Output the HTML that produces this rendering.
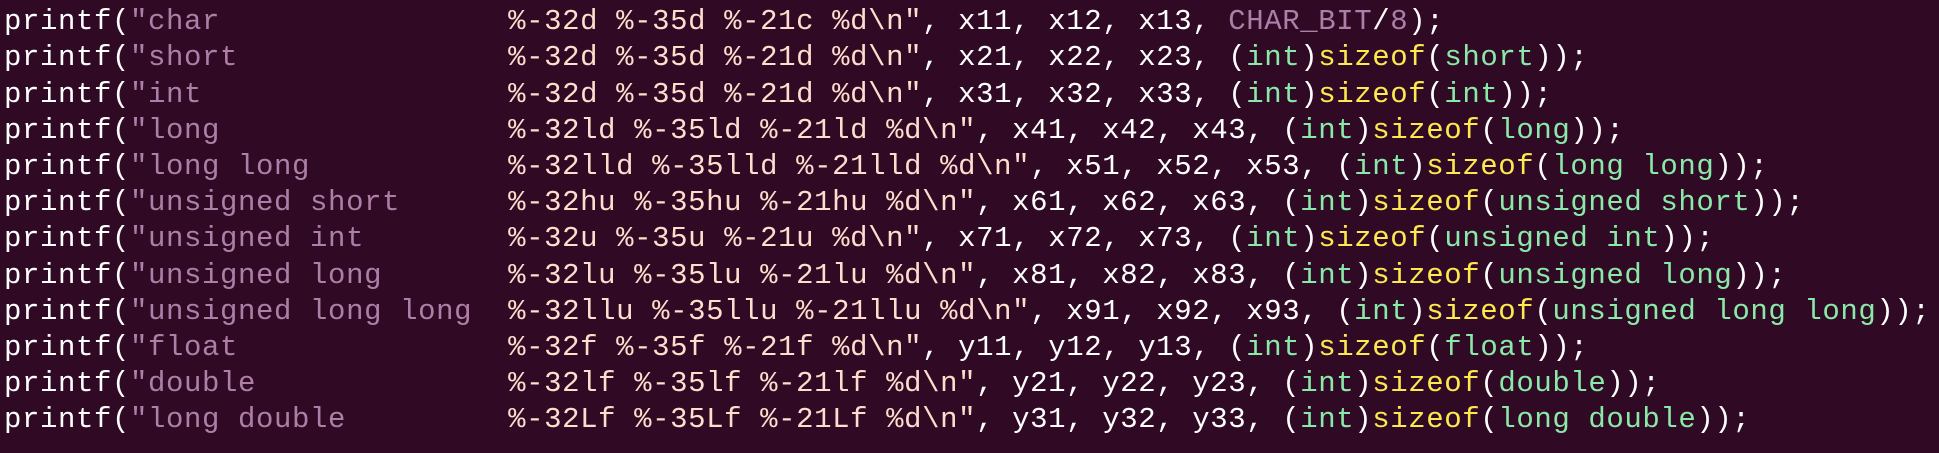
<!DOCTYPE html>
<html><head><meta charset="utf-8"><style>
html,body{margin:0;padding:0;background:#300a24;width:1939px;height:453px;overflow:hidden}
pre{position:absolute;left:4px;top:-32px;margin:0;font-family:"Liberation Mono",monospace;font-size:29px;letter-spacing:0.6px;line-height:36.2px;color:#ffffff}
.s{color:#ad7fa8}.f{color:#ffdccc}.g{color:#8ae8a8}.y{color:#fce94f}.c{color:#34e2e2}
</style></head><body><pre><span class="c">//                                  y</span>
printf(<span class="s">"char                </span><span class="f">%-32d %-35d %-21c %d\n"</span>, x11, x12, x13, <span class="s">CHAR_BIT</span>/<span class="s">8</span>);
printf(<span class="s">"short               </span><span class="f">%-32d %-35d %-21d %d\n"</span>, x21, x22, x23, (<span class="g">int</span>)<span class="y">sizeof</span>(<span class="g">short</span>));
printf(<span class="s">"int                 </span><span class="f">%-32d %-35d %-21d %d\n"</span>, x31, x32, x33, (<span class="g">int</span>)<span class="y">sizeof</span>(<span class="g">int</span>));
printf(<span class="s">"long                </span><span class="f">%-32ld %-35ld %-21ld %d\n"</span>, x41, x42, x43, (<span class="g">int</span>)<span class="y">sizeof</span>(<span class="g">long</span>));
printf(<span class="s">"long long           </span><span class="f">%-32lld %-35lld %-21lld %d\n"</span>, x51, x52, x53, (<span class="g">int</span>)<span class="y">sizeof</span>(<span class="g">long long</span>));
printf(<span class="s">"unsigned short      </span><span class="f">%-32hu %-35hu %-21hu %d\n"</span>, x61, x62, x63, (<span class="g">int</span>)<span class="y">sizeof</span>(<span class="g">unsigned short</span>));
printf(<span class="s">"unsigned int        </span><span class="f">%-32u %-35u %-21u %d\n"</span>, x71, x72, x73, (<span class="g">int</span>)<span class="y">sizeof</span>(<span class="g">unsigned int</span>));
printf(<span class="s">"unsigned long       </span><span class="f">%-32lu %-35lu %-21lu %d\n"</span>, x81, x82, x83, (<span class="g">int</span>)<span class="y">sizeof</span>(<span class="g">unsigned long</span>));
printf(<span class="s">"unsigned long long  </span><span class="f">%-32llu %-35llu %-21llu %d\n"</span>, x91, x92, x93, (<span class="g">int</span>)<span class="y">sizeof</span>(<span class="g">unsigned long long</span>));
printf(<span class="s">"float               </span><span class="f">%-32f %-35f %-21f %d\n"</span>, y11, y12, y13, (<span class="g">int</span>)<span class="y">sizeof</span>(<span class="g">float</span>));
printf(<span class="s">"double              </span><span class="f">%-32lf %-35lf %-21lf %d\n"</span>, y21, y22, y23, (<span class="g">int</span>)<span class="y">sizeof</span>(<span class="g">double</span>));
printf(<span class="s">"long double         </span><span class="f">%-32Lf %-35Lf %-21Lf %d\n"</span>, y31, y32, y33, (<span class="g">int</span>)<span class="y">sizeof</span>(<span class="g">long double</span>));</pre></body></html>
